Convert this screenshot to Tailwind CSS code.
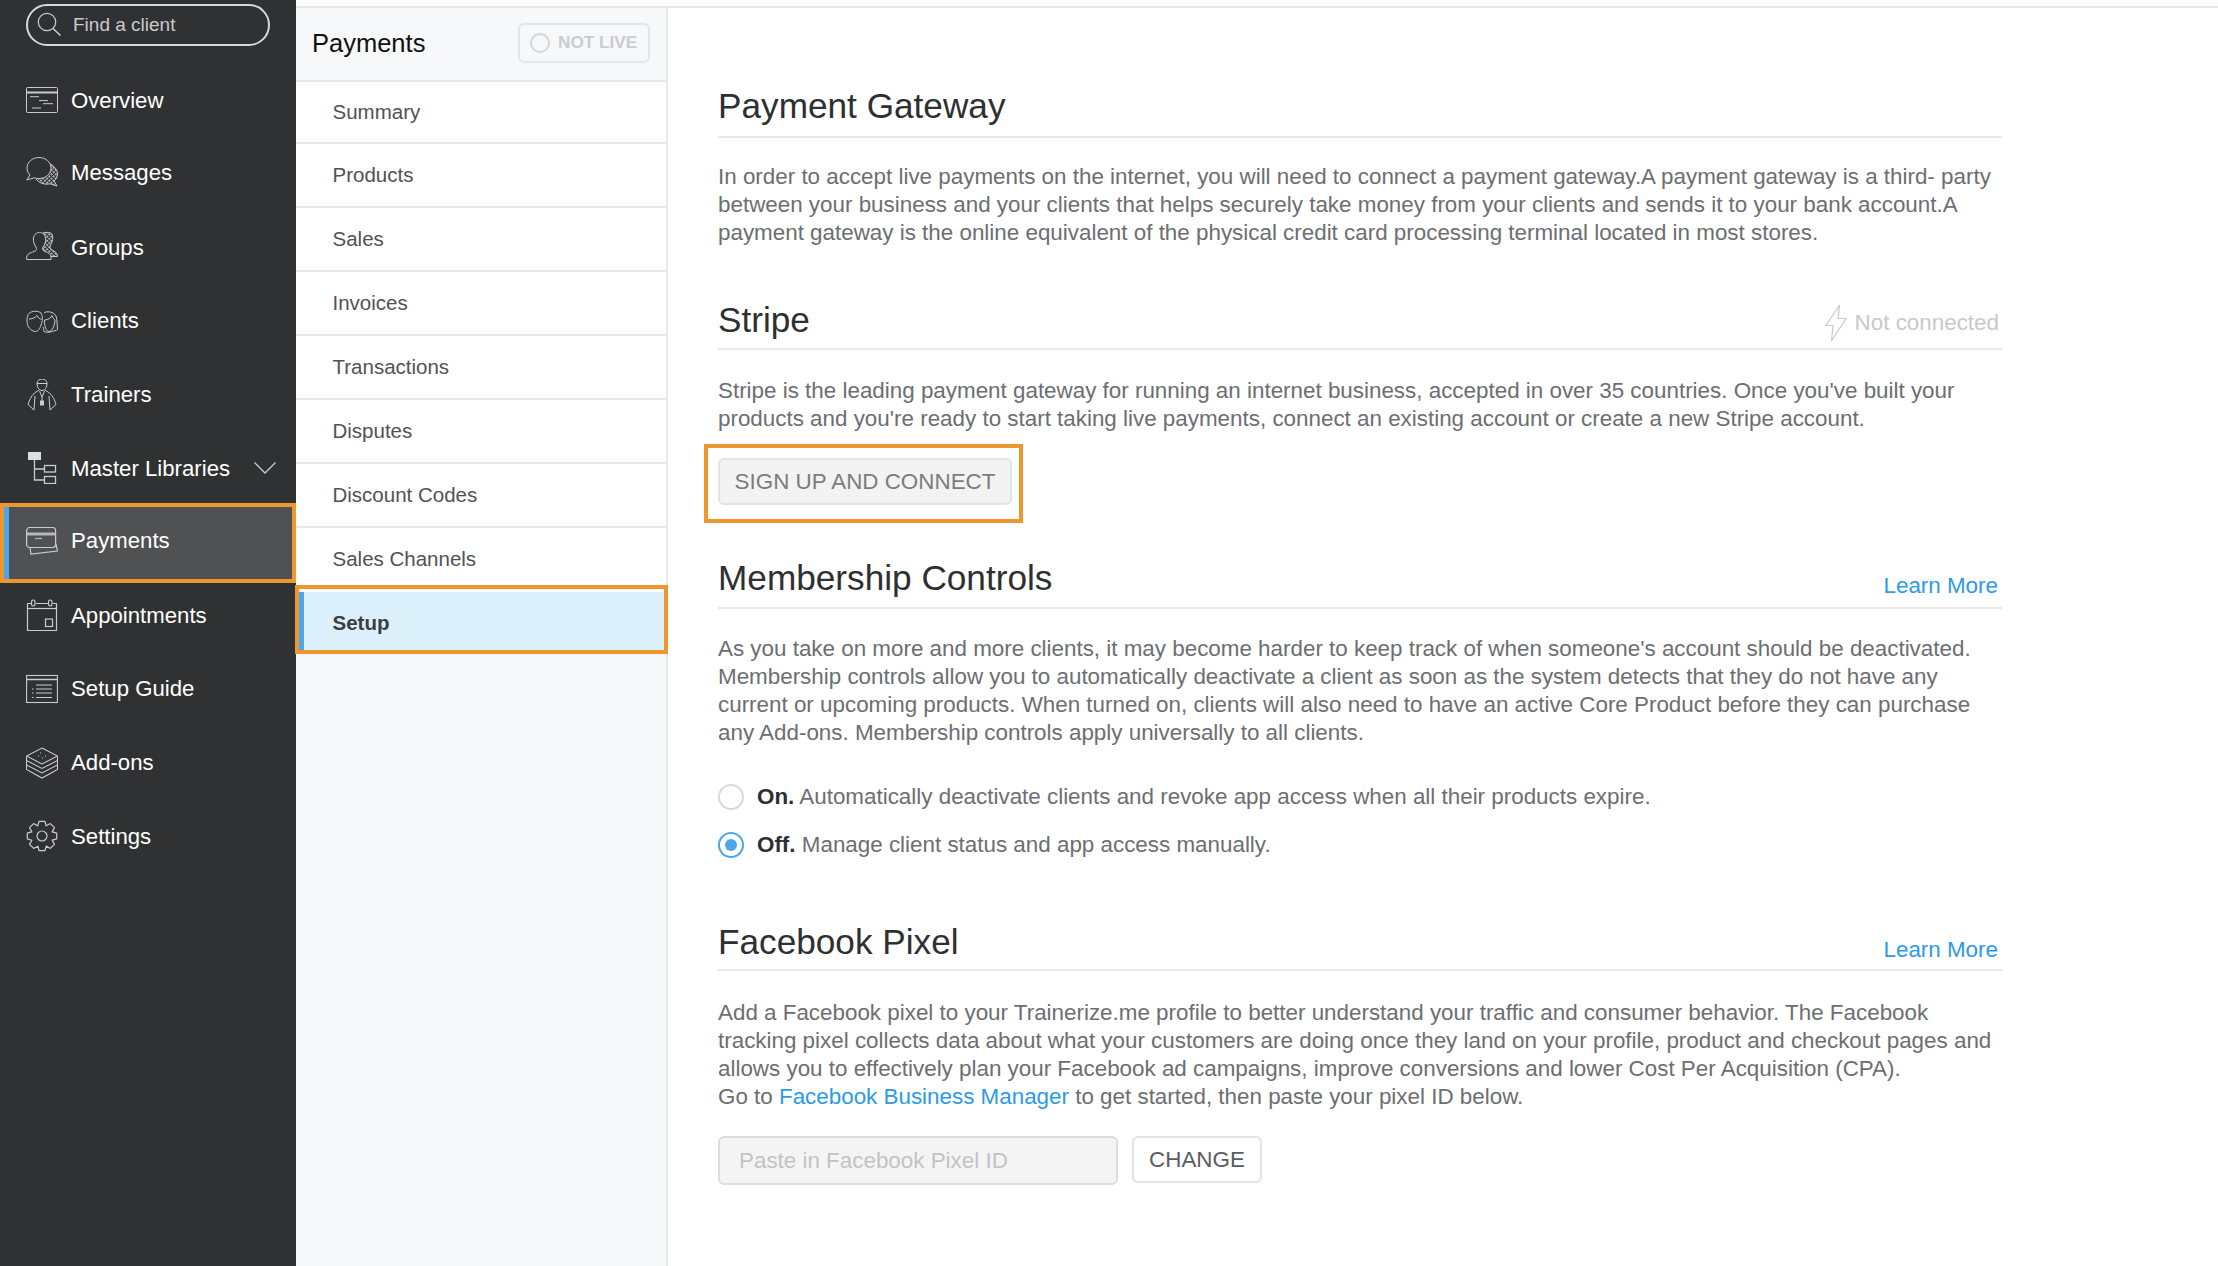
<!DOCTYPE html>
<html lang="en">
<head>
    <meta charset="UTF-8">
    <title>Payments Setup</title>
    <script src="https://cdn.jsdelivr.net/npm/@tailwindcss/browser@4"></script>
</head>
<body class="bg-white font-['Liberation_Sans',Arial,sans-serif]">
<div class="flex h-[1266px] overflow-hidden">
    <!-- main nav -->
    <aside class="w-[296px] shrink-0 bg-[#303133] pt-[4px] text-[22.2px] text-white">
        <div class="ml-[26px] flex h-[42px] w-[244px] items-center rounded-full border-2 border-[#d5d8dc] pl-[8px] text-[19px] text-[#c9cbce]">
            <svg class="h-[26px] w-[26px] shrink-0" viewBox="0 0 26 26" fill="none" stroke="#c9cbce" stroke-width="1.2"><circle cx="11" cy="10" r="8.7"/><path d="M17 16.5 L24.5 23.5" stroke-width="1.6"/></svg>
            <span class="ml-[11px] pt-[1px]">Find a client</span>
        </div>
        <nav class="mt-[17.5px]">
            <a class="flex h-[73.6px] items-center gap-[13px] pl-[26px]">
                <svg class="h-8 w-8 shrink-0" viewBox="0 0 32 32" fill="none" stroke="#c9cbce"><rect x="0.5" y="3.5" width="31" height="25" rx="1"/><path d="M1 8.5H31" stroke-width="2"/><path d="M4 12.7H13M13 16.6H22M17 19.7H27M6 24H15"/></svg>
                <span>Overview</span>
            </a>
            <a class="flex h-[73.6px] items-center gap-[13px] pb-[3px] pl-[26px]">
                <svg class="h-8 w-8 shrink-0" viewBox="0 0 32 32" fill="none" stroke="#c9cbce">
                    <defs><pattern id="dots" width="3" height="3" patternUnits="userSpaceOnUse" patternTransform="rotate(45)"><rect width="1.3" height="1.3" fill="#9a9c9f"/></pattern></defs>
                    <path d="M22 7C27 9 31.5 13 31.5 18C31.5 21 30 23.5 28 25L31 30L24 27.8C18 29 13 27 10 23Z" fill="url(#dots)"/>
                    <path d="M13 1.5C19.5 1.5 25 6 25 12C25 18 19.5 22.5 13 22.5C11 22.5 10 22.3 8.5 21.8L0.8 24L4 19C2 17 1 14.8 1 12C1 6 6.5 1.5 13 1.5Z" fill="#303133"/>
                </svg>
                <span>Messages</span>
            </a>
            <a class="flex h-[73.6px] items-center gap-[13px] pl-[26px]">
                <svg class="h-8 w-8 shrink-0" viewBox="0 0 32 32" fill="none" stroke="#c9cbce">
                    <path d="M17 2C19 1 24 1 26 3C27.5 6 26.5 11 24.500 14C23.500 16 24 18 26 19C29 20.500 31.500 22 31.500 25.500H22L15 14Z" fill="url(#dots)"/>
                    <path d="M0.7 28.500V26C1 23 4 22 8 20.500C10.500 19.500 11 18 10 16C8 13.500 7 10 7.500 7C8 3 11 1.500 13.500 1.500C16 1.500 19 3 19.500 7C20 10 19 13.500 17 16C16 18 16.500 19.500 19 20.500C23 22 25 23.500 25 26V28.500Z" fill="#303133"/>
                </svg>
                <span>Groups</span>
            </a>
            <a class="flex h-[73.6px] items-center gap-[13px] pl-[26px]">
                <svg class="h-8 w-8 shrink-0" viewBox="0 0 32 32" fill="none" stroke="#c9cbce">
                    <path d="M2 21C0.500 17 0.500 11 3 8.500C6 5.500 12 5.500 15 8C17 11 16.500 17 15 20C14 24 11.500 26.500 9.500 26.500C6.500 26.500 3.500 24 2 21Z"/>
                    <path d="M3 14C6 14 9 13 11 10.500C12 13 14 14 15.500 14.500"/>
                    <path d="M17 22C18 24 17.500 26 18 26.500C20 27.500 24 27.500 26 26.500C27 26 31 25.500 31.500 24.500C31 21 31.500 15 30 11C28 7 21 5.500 18 8" fill="#303133"/>
                    <path d="M18.500 15C22 15 25 13 26 10.500C27 13 28 14.500 29 15C29 20 26 26.500 23 26.500C20.500 26.500 18 21 18.500 15Z"/>
                </svg>
                <span>Clients</span>
            </a>
            <a class="flex h-[73.6px] items-center gap-[13px] pl-[26px]">
                <svg class="h-8 w-8 shrink-0" viewBox="0 0 32 32" fill="none" stroke="#c9cbce">
                    <path d="M11 4.500C11 2 13 0 16 0C19 0 21 2 21 4.500C21 8 19 11.500 16 11.500C13 11.500 11 8 11 4.500Z"/>
                    <path d="M11 4.500H21"/>
                    <path d="M13 11L8.500 14C5 17 3 22 2 25.500L8 31L9 17M19 11L23.500 14C27 17 29 22 30 25.500L24 31L23 17"/>
                    <path d="M13.500 12L16 18L18.500 12M16 18V23"/>
                    <rect x="14.500" y="22" width="3" height="4" fill="#c9cbce"/>
                </svg>
                <span>Trainers</span>
            </a>
            <a class="flex h-[73.6px] items-center gap-[13px] pl-[26px]">
                <svg class="h-8 w-8 shrink-0" viewBox="0 0 32 32" fill="none" stroke="#c9cbce" stroke-width="1.3">
                    <rect x="2" y="0" width="13" height="8" fill="#dcdee0" stroke="none"/>
                    <path d="M8.500 8V28H18M8.500 17H18"/>
                    <rect x="18.500" y="13.500" width="11" height="6.500"/>
                    <rect x="18.500" y="24.500" width="11" height="7"/>
                </svg>
                <span>Master Libraries</span>
                <svg class="ml-auto mr-[20px] h-[12px] w-[22px]" viewBox="0 0 22 12" fill="none" stroke="#c9cbce" stroke-width="1.3"><path d="M0.500 0.500L11 11L21.500 0.500"/></svg>
            </a>
            <a class="relative flex h-[73.6px] items-center gap-[13px] pb-[2px] pl-[26px]">
                <div class="absolute -bottom-[4px] -top-[2px] left-0 right-0 border-4 border-[#f0962f] bg-[#505153]">
                    <div class="h-full w-[5px] bg-[#4ba6ec]"></div>
                </div>
                <svg class="relative h-8 w-8 shrink-0" viewBox="0 0 32 32" fill="none" stroke="#c9cbce" stroke-width="1.2">
                    <path d="M4 22.500L5 29L31.500 26L30 19"/>
                    <rect x="0.600" y="2.500" width="29" height="20" rx="3" fill="#505153"/>
                    <path d="M1 9H29.500" stroke-width="3" stroke="#b5b7ba"/>
                    <path d="M9 13.500H16" stroke="#b5b7ba"/>
                </svg>
                <span class="relative">Payments</span>
            </a>
            <a class="flex h-[73.6px] items-center gap-[13px] pl-[26px]">
                <svg class="h-8 w-8 shrink-0" viewBox="0 0 32 32" fill="none" stroke="#c9cbce" stroke-width="1.2">
                    <path d="M5 4.500H1.500V31.500H30.500V4.500H27M10 4.500H23"/>
                    <rect x="5.500" y="1" width="3.500" height="6" rx="1.700"/>
                    <rect x="22.500" y="1" width="3.500" height="6" rx="1.700"/>
                    <path d="M1.500 9.500H30.500"/>
                    <rect x="19.500" y="20" width="7" height="7.500"/>
                </svg>
                <span>Appointments</span>
            </a>
            <a class="flex h-[73.6px] items-center gap-[13px] pl-[26px]">
                <svg class="h-8 w-8 shrink-0" viewBox="0 0 32 32" fill="none" stroke="#c9cbce" stroke-width="1.1">
                    <rect x="0.600" y="2.500" width="30.800" height="27" />
                    <path d="M1 6.500H31" stroke-width="1.500"/>
                    <path d="M10 12H26M10 16H26M10 20H26M10 24.500H26"/>
                    <path d="M6 16H7.500M6 20H7.500M6 24.500H7.500"/>
                </svg>
                <span>Setup Guide</span>
            </a>
            <a class="flex h-[73.6px] items-center gap-[13px] pl-[26px]">
                <svg class="h-8 w-8 shrink-0" viewBox="0 0 32 32" fill="none" stroke="#c9cbce" stroke-width="1.1">
                    <path d="M16 1L31.500 9L16 17L0.500 9Z"/>
                    <path d="M0.500 9V13.500L16 21.500L31.500 13.500V9"/>
                    <path d="M0.500 13.500V18L16 26L31.500 18V13.500"/>
                    <path d="M0.500 18V22.500L16 31L31.500 22.500V18"/>
                    <path d="M14 6H15M12 9H13M19 9H20M16 11H17" stroke-width="1"/>
                </svg>
                <span>Add-ons</span>
            </a>
            <a class="flex h-[73.6px] items-center gap-[13px] pl-[26px]">
                <svg class="h-8 w-8 shrink-0" viewBox="0 0 32 32" fill="none" stroke="#c9cbce" stroke-width="1.2" stroke-linejoin="round">
                    <polygon points="26.200,11.880 30.720,13.140 30.720,18.860 26.200,20.120 28.440,24.390 24.390,28.440 20.300,26.130 18.860,30.720 13.140,30.720 11.880,26.200 7.610,28.440 3.560,24.390 5.870,20.300 1.280,18.860 1.280,13.140 5.800,11.880 3.560,7.610 7.610,3.560 11.700,5.870 13.140,1.280 18.860,1.280 20.120,5.800 24.390,3.560 28.440,7.610"/>
                    <circle cx="16" cy="16" r="5"/>
                </svg>
                <span>Settings</span>
            </a>
        </nav>
    </aside>

    <div class="flex min-w-0 flex-1 flex-col">
        <div class="h-[8px] shrink-0 border-b-2 border-[#e8e9eb]"></div>
        <div class="flex flex-1">
            <!-- sub nav -->
            <div class="w-[372px] shrink-0 border-r-2 border-[#e8e9eb] bg-[#f7f8fa] text-[20.5px] text-[#505255]">
                <div class="flex h-[74px] items-center justify-between border-b-2 border-[#e8e9eb] pb-[2px] pl-[16px] pr-[16px]">
                    <span class="text-[25.5px] text-[#111]">Payments</span>
                    <span class="flex h-[40px] w-[132px] items-center gap-[8px] rounded-[6px] border-2 border-[#e3e5e8] pl-[10px] text-[17.2px] font-bold text-[#c9ccd1]">
                        <span class="h-[20px] w-[20px] rounded-full border-2 border-[#d3d6da]"></span>NOT LIVE
                    </span>
                </div>
                <div class="flex h-[62px] items-center border-b-2 border-[#e8e9eb] bg-white pl-[36.5px] pt-[1px]">Summary</div>
                <div class="flex h-[64px] items-center border-b-2 border-[#e8e9eb] bg-white pl-[36.5px]">Products</div>
                <div class="flex h-[64px] items-center border-b-2 border-[#e8e9eb] bg-white pl-[36.5px]">Sales</div>
                <div class="flex h-[64px] items-center border-b-2 border-[#e8e9eb] bg-white pl-[36.5px]">Invoices</div>
                <div class="flex h-[64px] items-center border-b-2 border-[#e8e9eb] bg-white pl-[36.5px]">Transactions</div>
                <div class="flex h-[64px] items-center border-b-2 border-[#e8e9eb] bg-white pl-[36.5px]">Disputes</div>
                <div class="flex h-[64px] items-center border-b-2 border-[#e8e9eb] bg-white pl-[36.5px]">Discount Codes</div>
                <div class="flex h-[64px] items-center border-b-2 border-[#e8e9eb] bg-white pl-[36.5px]">Sales Channels</div>
                <div class="relative flex h-[62px] items-center bg-white pl-[36.5px] font-bold text-[#3c3e41]">
                    <div class="absolute -bottom-0 -left-[1px] -right-[2px] -top-[7px] border-4 border-[#f0962f] bg-white pt-[3px]">
                        <div class="h-full border-l-[5px] border-[#4ba6ec] bg-[#dcf0fb]"></div>
                    </div>
                    <span class="relative">Setup</span>
                </div>
            </div>

            <!-- content -->
            <main class="ml-[50px] w-[1284px] pt-[76px] text-[22.4px] leading-[28px] text-[#6c6e71]">
                <div class="border-b-2 border-[#e8e9eb] pb-[8px] text-[35.2px] leading-[44px] text-[#2e2f31]">Payment Gateway</div>
                <p class="mt-[25px] whitespace-nowrap">In order to accept live payments on the internet, you will need to connect a payment gateway.A payment gateway is a third- party<br>between your business and your clients that helps securely take money from your clients and sends it to your bank account.A<br>payment gateway is the online equivalent of the physical credit card processing terminal located in most stores.</p>

                <div class="mt-[51px] flex items-center justify-between border-b-2 border-[#e8e9eb] pb-[6px] pr-[3px]">
                    <span class="text-[35.2px] leading-[44px] text-[#2e2f31]">Stripe</span>
                    <span class="mt-[6px] flex items-center gap-[8px] text-[#c6c9cd]">
                        <svg class="h-[38px] w-[22px]" viewBox="0 0 22 38" fill="none" stroke="#c6c9cd" stroke-width="1.2"><path d="M14.500 1L1 21.500H8L6.500 37L21 14.500H13Z"/></svg>
                        Not connected
                    </span>
                </div>
                <p class="mt-[27px] whitespace-nowrap">Stripe is the leading payment gateway for running an internet business, accepted in over 35 countries. Once you've built your<br>products and you're ready to start taking live payments, connect an existing account or create a new Stripe account.</p>
                <div class="-ml-[14px] mt-[11px] h-[79px] w-[319px] border-4 border-[#f0962f] pl-[10px] pt-[10px]">
                    <button class="h-[47px] w-[294px] rounded-[6px] border-2 border-[#e1e4e8] bg-[#f3f3f4] text-[22.4px] text-[#7a7c7f]">SIGN UP AND CONNECT</button>
                </div>

                <div class="mt-[33px] flex items-center justify-between border-b-2 border-[#e8e9eb] pb-[7px] pr-[4px]">
                    <span class="text-[35.2px] leading-[44px] text-[#2e2f31]">Membership Controls</span>
                    <a class="mt-[16px] text-[#2c9ae8]">Learn More</a>
                </div>
                <p class="mt-[26px] whitespace-nowrap">As you take on more and more clients, it may become harder to keep track of when someone's account should be deactivated.<br>Membership controls allow you to automatically deactivate a client as soon as the system detects that they do not have any<br>current or upcoming products. When turned on, clients will also need to have an active Core Product before they can purchase<br>any Add-ons. Membership controls apply universally to all clients.</p>
                <div class="mt-[26px] flex h-[48px] items-center gap-[13px]">
                    <span class="h-[26px] w-[26px] rounded-full border-2 border-[#d9d9d9]"></span>
                    <span><b class="text-[#2e2f31]">On.</b> Automatically deactivate clients and revoke app access when all their products expire.</span>
                </div>
                <div class="flex h-[48px] items-center gap-[13px]">
                    <span class="flex h-[26px] w-[26px] items-center justify-center rounded-full border-2 border-[#4ba6ec]"><span class="h-[12px] w-[12px] rounded-full bg-[#4ba6ec]"></span></span>
                    <span><b class="text-[#2e2f31]">Off.</b> Manage client status and app access manually.</span>
                </div>

                <div class="mt-[51px] flex items-center justify-between border-b-2 border-[#e8e9eb] pb-[5px] pr-[4px]">
                    <span class="text-[35.2px] leading-[44px] text-[#2e2f31]">Facebook Pixel</span>
                    <a class="mt-[16px] text-[#2c9ae8]">Learn More</a>
                </div>
                <p class="mt-[28px] whitespace-nowrap">Add a Facebook pixel to your Trainerize.me profile to better understand your traffic and consumer behavior. The Facebook<br>tracking pixel collects data about what your customers are doing once they land on your profile, product and checkout pages and<br>allows you to effectively plan your Facebook ad campaigns, improve conversions and lower Cost Per Acquisition (CPA).<br>Go to <a class="text-[#2c9ae8]">Facebook Business Manager</a> to get started, then paste your pixel ID below.</p>
                <div class="mt-[25px] flex items-start gap-[14px]">
                    <div class="flex h-[49px] w-[400px] items-center rounded-[6px] border-2 border-[#dcdde0] bg-[#f4f4f5] pl-[19px] text-[#c2c3c5]">Paste in Facebook Pixel ID</div>
                    <button class="h-[47px] w-[130px] rounded-[6px] border-2 border-[#e1e4e8] bg-white text-[22.4px] text-[#5a5c5f]">CHANGE</button>
                </div>
            </main>
        </div>
    </div>
</div>
</body>
</html>
